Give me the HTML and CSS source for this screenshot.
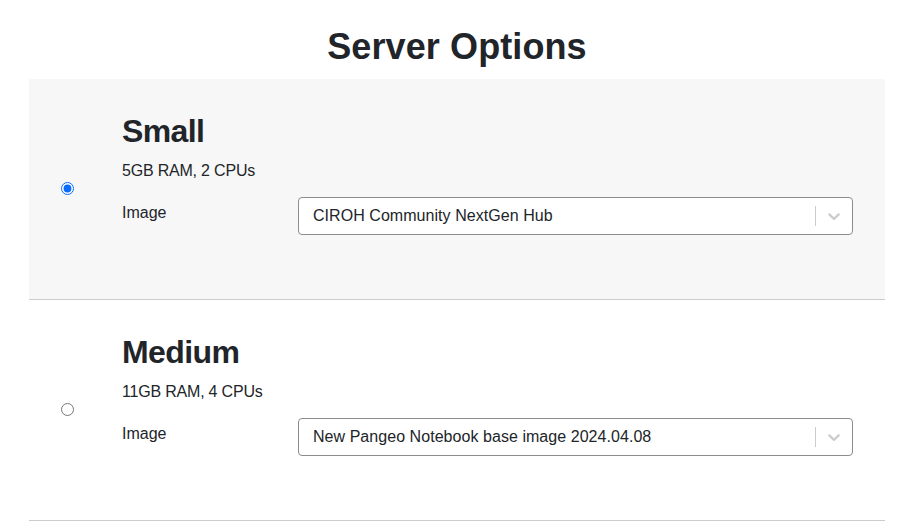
FILE: index.html
```html
<!DOCTYPE html>
<html lang="en">
<head>
<meta charset="utf-8">
<title>Server Options</title>
<link rel="stylesheet" href="styles.css">
</head>
<body>
<div class="page">
  <h1 class="title">Server Options</h1>
  <div class="options">
    <label class="option option-selected">
      <span class="radio-col"><input class="radio" type="radio" name="profile" checked></span>
      <span class="content">
        <span class="name">Small</span>
        <span class="desc">5GB RAM, 2 CPUs</span>
        <span class="field">
          <span class="field-label">Image</span>
          <span class="select">
            <span class="select-value">CIROH Community NextGen Hub</span>
            <span class="select-sep"></span>
            <span class="select-ind"><svg viewBox="0 0 20 20" width="20" height="20"><path d="M4.516 7.548c0.436-0.446 1.043-0.481 1.576 0l3.908 3.747 3.908-3.747c0.533-0.481 1.141-0.446 1.574 0 0.436 0.445 0.408 1.197 0 1.615-0.406 0.418-4.695 4.502-4.695 4.502-0.217 0.223-0.502 0.335-0.787 0.335s-0.57-0.112-0.789-0.335c0 0-4.287-4.084-4.695-4.502s-0.436-1.170 0-1.615z" fill="#cccccc"/></svg></span>
          </span>
        </span>
      </span>
    </label>
    <label class="option">
      <span class="radio-col"><input class="radio" type="radio" name="profile"></span>
      <span class="content">
        <span class="name">Medium</span>
        <span class="desc">11GB RAM, 4 CPUs</span>
        <span class="field">
          <span class="field-label">Image</span>
          <span class="select">
            <span class="select-value">New Pangeo Notebook base image 2024.04.08</span>
            <span class="select-sep"></span>
            <span class="select-ind"><svg viewBox="0 0 20 20" width="20" height="20"><path d="M4.516 7.548c0.436-0.446 1.043-0.481 1.576 0l3.908 3.747 3.908-3.747c0.533-0.481 1.141-0.446 1.574 0 0.436 0.445 0.408 1.197 0 1.615-0.406 0.418-4.695 4.502-4.695 4.502-0.217 0.223-0.502 0.335-0.787 0.335s-0.57-0.112-0.789-0.335c0 0-4.287-4.084-4.695-4.502s-0.436-1.170 0-1.615z" fill="#cccccc"/></svg></span>
          </span>
        </span>
      </span>
    </label>
  </div>
</div>
</body>
</html>
```
FILE: styles.css
```css
* { box-sizing: border-box; }
html, body { margin: 0; padding: 0; background: #ffffff; }
body {
  font-family: "Liberation Sans", Arial, sans-serif;
  font-size: 16px;
  line-height: 1.5;
  color: #212529;
}
.page {
  padding: 25px 27px 0 29px;
}
.title {
  margin: 0 0 11px;
  font-size: 36px;
  font-weight: 700;
  line-height: 1.2;
  text-align: center;
  letter-spacing: 0.1px;
}
.options { display: flex; flex-direction: column; }
.option {
  display: flex;
  align-items: center;
  height: 221px;
  border-bottom: 1px solid #cccccc;
  cursor: pointer;
}
.option-selected { background: #f7f7f7; }
.radio-col {
  width: 76px;
  flex: none;
  display: flex;
  justify-content: center;
  padding-bottom: 1px;
}
.radio {
  margin: 0;
  width: 13px;
  height: 13px;
  accent-color: #0a6cff;
}
.content {
  flex: 1;
  align-self: stretch;
  display: flex;
  flex-direction: column;
  padding: 33px 32px 0 17px;
}
.name {
  display: block;
  font-size: 32px;
  font-weight: 700;
  line-height: 1.2;
  margin-bottom: 8px;
  letter-spacing: -0.6px;
}
.desc {
  display: block;
  margin-bottom: 14.5px;
  letter-spacing: -0.2px;
}
.field {
  display: flex;
  align-items: flex-start;
}
.field-label {
  width: 176px;
  flex: none;
  margin-top: 4px;
}
.select {
  flex: 1;
  display: flex;
  align-items: center;
  height: 38px;
  border: 1px solid #8c8c8c;
  border-radius: 4px;
  background: #ffffff;
}
.select-value {
  flex: 1;
  padding-left: 14px;
  white-space: nowrap;
  letter-spacing: 0.05px;
}
.select-sep {
  width: 1px;
  height: 20px;
  background: #cccccc;
}
.select-ind {
  display: flex;
  padding: 0 8px;
}
.select-ind svg { display: block; }
```
